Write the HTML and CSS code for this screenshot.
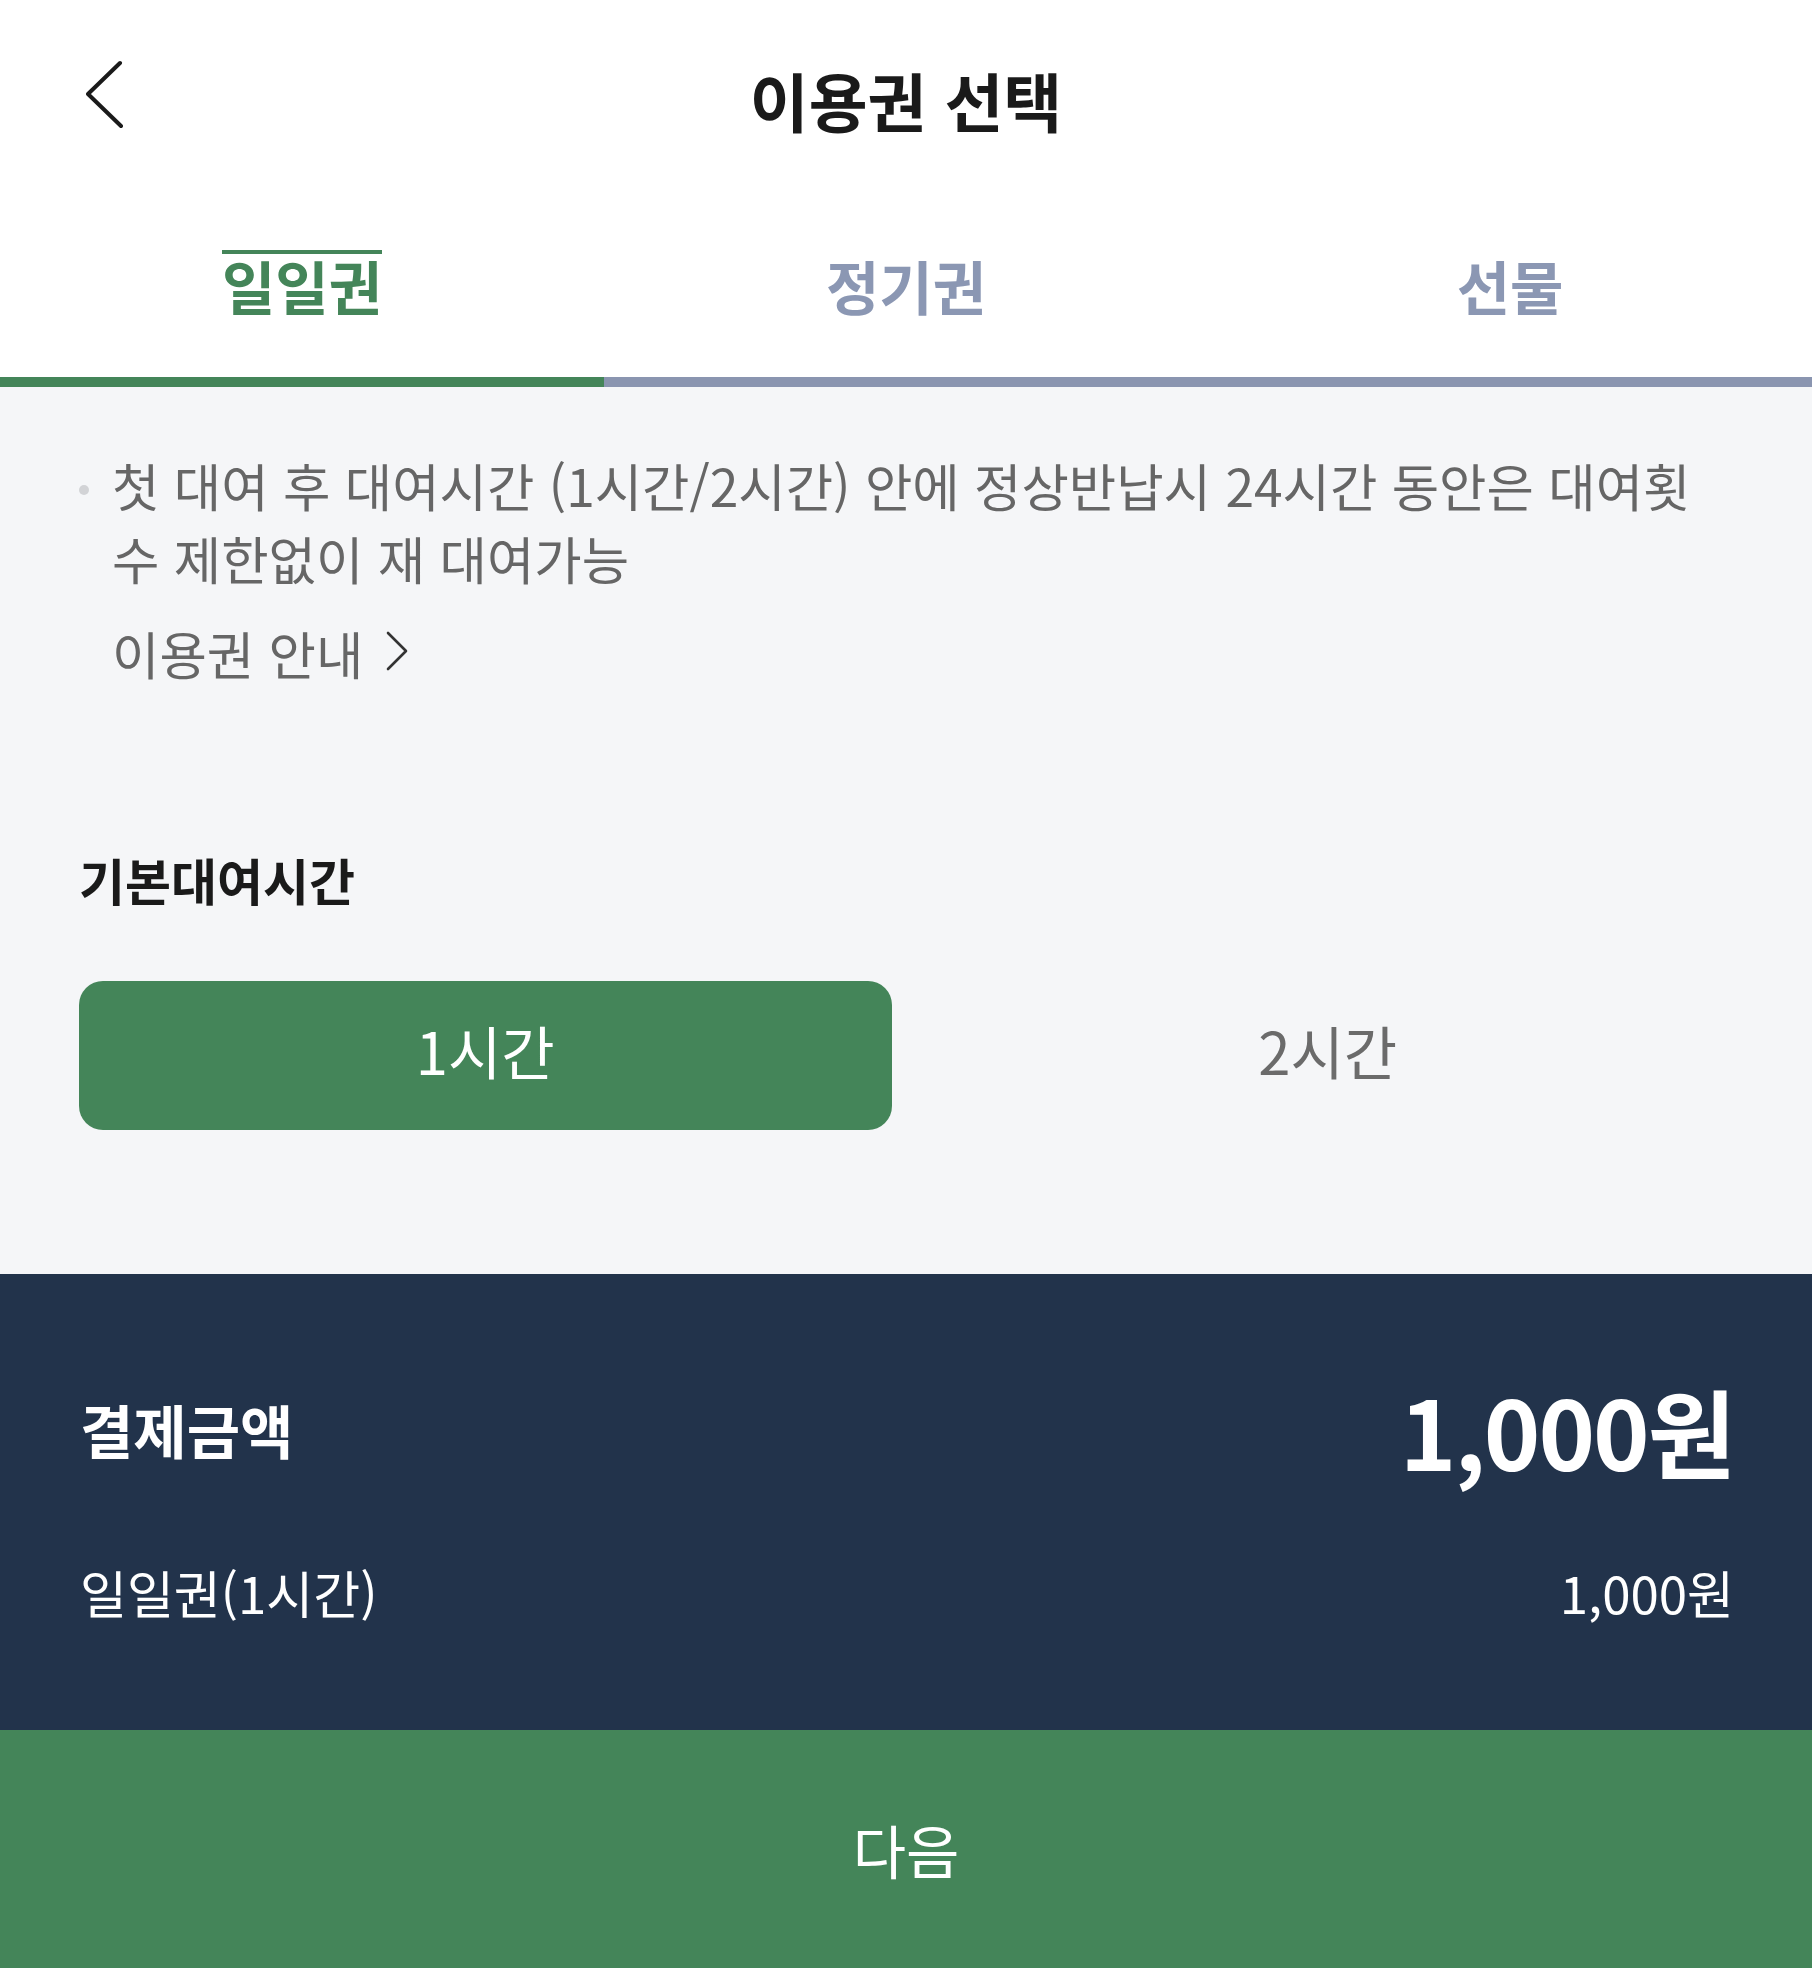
FILE: index.html
```html
<!DOCTYPE html>
<html lang="ko">
<head>
<meta charset="utf-8">
<title>이용권 선택</title>
<link rel="stylesheet" href="styles.css">
</head>
<body>
<div class="app">
  <header class="topbar">
    <button class="back" aria-label="뒤로">
      <svg width="38" height="70" viewBox="0 0 38 70"><polyline points="34,3 2,34 35,66" fill="none" stroke="#1a1a1a" stroke-width="4" stroke-linecap="round" stroke-linejoin="round"/></svg>
    </button>
    <h1 class="title">이용권 선택</h1>
    <span class="spacer"></span>
  </header>

  <nav class="tabs">
    <div class="tab active"><span class="tab-label">일일권</span></div>
    <div class="tab"><span class="tab-label">정기권</span></div>
    <div class="tab"><span class="tab-label">선물</span></div>
  </nav>

  <main class="content">
    <ul class="notice">
      <li>첫 대여 후 대여시간 (1시간/2시간) 안에 정상반납시 24시간 동안은 대여횟수 제한없이 재 대여가능</li>
    </ul>
    <a class="guide">이용권 안내
      <svg width="24" height="40" viewBox="0 0 24 40"><polyline points="3,2 21,20 3,38" fill="none" stroke="#333" stroke-width="2.6" stroke-linecap="round" stroke-linejoin="round"/></svg>
    </a>

    <h2 class="section-title">기본대여시간</h2>
    <div class="options">
      <button class="option selected">1시간</button>
      <button class="option">2시간</button>
    </div>
  </main>

  <section class="payment">
    <div class="pay-row">
      <span class="pay-label">결제금액</span>
      <span class="pay-total">1,000원</span>
    </div>
    <div class="item-row">
      <span>일일권(1시간)</span>
      <span>1,000원</span>
    </div>
  </section>

  <button class="next">다음</button>
</div>
</body>
</html>
```

FILE: styles.css
```css
* { box-sizing: border-box; }
html, body { margin: 0; padding: 0; }
body {
  font-family: "Noto Sans CJK KR", "Noto Sans", sans-serif;
  background: #ffffff;
  color: #1a1a1a;
}
.app {
  width: 1812px;
  height: 1968px;
  display: flex;
  flex-direction: column;
}
.topbar {
  height: 198px;
  display: grid;
  grid-template-columns: 1fr auto 1fr;
  align-items: center;
}
.back {
  justify-self: start;
  margin: 0 0 0 86px;
  padding: 0;
  border: 0;
  background: none;
  display: flex;
  position: relative;
  top: -4px;
}
.title {
  margin: 0;
  font-size: 64px;
  font-weight: 700;
  line-height: 80px;
  color: #1a1a1a;
}
.tabs {
  display: grid;
  grid-template-columns: repeat(3, 1fr);
}
.tab {
  height: 189px;
  padding-top: 52px;
  display: flex;
  justify-content: center;
  align-items: flex-start;
  border-bottom: 10px solid #8a95b0;
  color: #8b97b3;
  font-size: 58px;
  font-weight: 700;
}
.tab-label {
  display: inline-block;
  line-height: 62px;
  border-top: 4px solid transparent;
}
.tab.active {
  border-bottom-color: #448559;
  color: #448559;
}
.tab.active .tab-label { border-top-color: #448559; }

.content {
  flex: 1;
  background: #f5f6f8;
  padding: 61px 78px 0 79px;
}
.notice {
  list-style: none;
  margin: 0;
  padding: 0 30px 0 0;
}
.notice li {
  display: flex;
  font-size: 51.5px;
  line-height: 73px;
  color: #666666;
}
.notice li::before {
  content: "";
  flex: 0 0 10px;
  height: 10px;
  margin: 37px 23px 0 0;
  border-radius: 50%;
  background: #d2d3d6;
}
.guide {
  display: flex;
  align-items: center;
  gap: 22px;
  margin: 22px 0 0 33px;
  font-size: 51.5px;
  line-height: 73px;
  color: #666666;
}
.guide svg { margin-top: -4px; }
.section-title {
  margin: 157px 0 0 0;
  font-size: 50px;
  line-height: 66px;
  font-weight: 700;
  color: #1a1a1a;
}
.options {
  margin-top: 69px;
  display: grid;
  grid-template-columns: 1fr 1fr;
  gap: 30px;
}
.option {
  height: 149px;
  border: 0;
  border-radius: 24px;
  background: transparent;
  font-family: inherit;
  font-size: 58px;
  color: #6b6b6b;
  padding: 0 0 12px 0;
}
.option.selected {
  background: #448559;
  color: #ffffff;
}

.payment {
  height: 456px;
  background: #22334b;
  color: #ffffff;
  padding: 85px 78px 0 80px;
}
.pay-row {
  height: 140px;
  display: flex;
  justify-content: space-between;
  align-items: center;
}
.pay-label {
  font-size: 58px;
  font-weight: 700;
}
.pay-total {
  font-size: 96px;
  font-weight: 700;
  letter-spacing: -2px;
}
.item-row {
  margin-top: 57px;
  display: flex;
  justify-content: space-between;
  font-size: 51px;
  line-height: 72px;
}
.next {
  height: 238px;
  border: 0;
  background: #448559;
  color: #ffffff;
  font-family: inherit;
  font-size: 58px;
  padding: 0;
}
```
